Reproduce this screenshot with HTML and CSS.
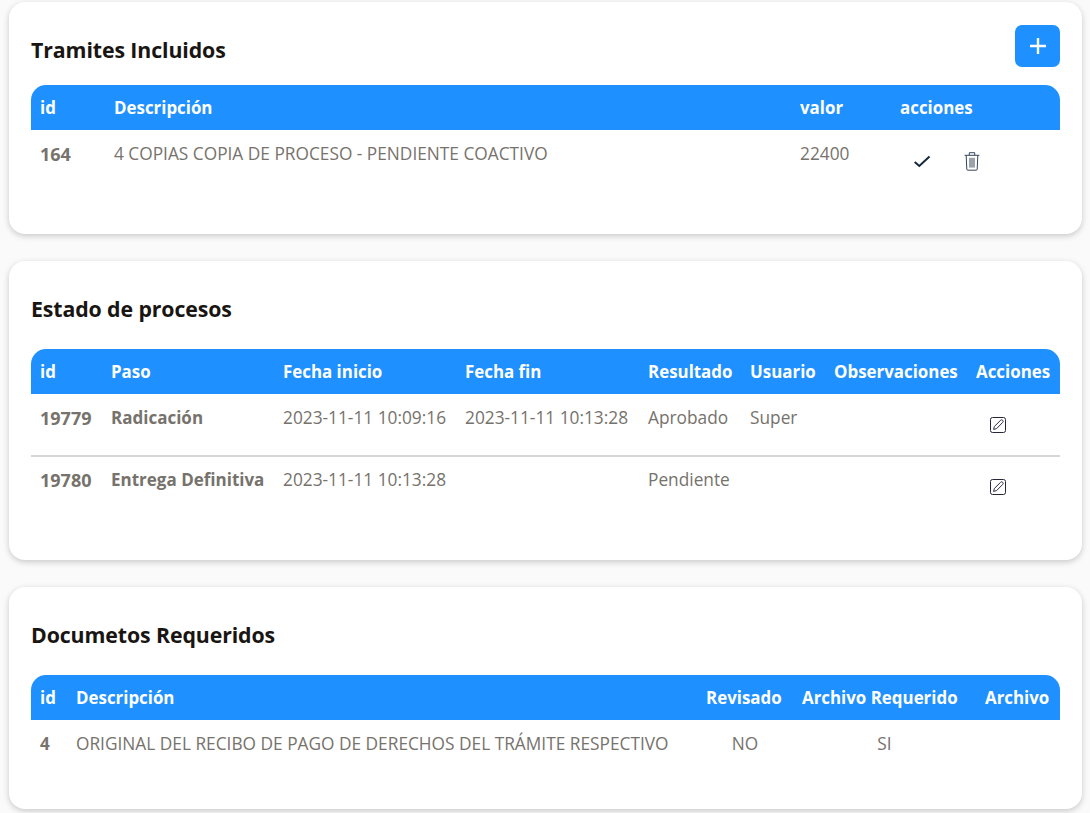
FILE: index.html
```
<!DOCTYPE html>
<html lang="es">
<head>
<meta charset="utf-8">
<title>Trámites</title>
<link rel="stylesheet" href="styles.css">
</head>
<body>
<main class="page">
  <section class="card card-one">
    <div class="card-head head-one">
      <h2>Tramites Incluidos</h2>
      <button class="add" type="button" aria-label="Agregar">
        <svg width="16" height="16" viewBox="0 0 16 16"><path d="M8 0v16M0 8h16" stroke="#fff" stroke-width="2.400" fill="none"/></svg>
      </button>
    </div>
    <table>
      <colgroup><col class="w74"><col class="w686"><col class="w100"><col></colgroup>
      <thead><tr><th>id</th><th>Descripción</th><th>valor</th><th>acciones</th></tr></thead>
      <tbody>
        <tr>
          <td class="b num">164</td>
          <td>4 COPIAS COPIA DE PROCESO - PENDIENTE COACTIVO</td>
          <td>22400</td>
          <td class="actions">
            <div class="action-row">
              <svg width="20" height="20" viewBox="0 0 20 20"><path d="M2.700 11l4.600 4L17.500 5.500" stroke="#14283c" stroke-width="2" fill="none"/></svg>
              <svg width="20" height="20" viewBox="0 0 20 20" fill="none" stroke="#34465a" stroke-width="1"><path d="M2.600 4.300h14.800M7.300 4.300V1.700h5.400v2.600M4.200 4.300l.6 14c0 .5.4.9.9.9h8.600c.5 0 .9-.4.9-.9l.6-14M8 6.800v9.800M10 6.800v9.800M12 6.800v9.800"/></svg>
            </div>
          </td>
        </tr>
      </tbody>
    </table>
  </section>

  <section class="card card-two">
    <div class="card-head head-two"><h2>Estado de procesos</h2></div>
    <table>
      <colgroup><col class="w71"><col class="w172"><col class="w182"><col class="w183"><col class="w102"><col class="w84"><col class="w142"><col></colgroup>
      <thead><tr><th>id</th><th>Paso</th><th>Fecha inicio</th><th>Fecha fin</th><th>Resultado</th><th>Usuario</th><th>Observaciones</th><th>Acciones</th></tr></thead>
      <tbody>
        <tr class="sep">
          <td class="b num">19779</td><td class="b">Radicación</td><td>2023-11-11 10:09:16</td><td>2023-11-11 10:13:28</td><td>Aprobado</td><td>Super</td><td></td>
          <td class="edit-cell"><svg class="edit" width="16" height="16" viewBox="0 0 16 16" fill="none"><rect x=".5" y=".5" width="15" height="15" rx="2" stroke="#2b2438"/><path d="M3.600 12.400l.8-3L10.600 3.300a1.400 1.400 0 0 1 2.100 2.100L6.600 11.600z" stroke="#2b2b45" stroke-width="1"/></svg></td>
        </tr>
        <tr class="after-sep">
          <td class="b num">19780</td><td class="b">Entrega Definitiva</td><td>2023-11-11 10:13:28</td><td></td><td>Pendiente</td><td></td><td></td>
          <td class="edit-cell"><svg class="edit" width="16" height="16" viewBox="0 0 16 16" fill="none"><rect x=".5" y=".5" width="15" height="15" rx="2" stroke="#2b2438"/><path d="M3.600 12.400l.8-3L10.600 3.300a1.400 1.400 0 0 1 2.100 2.100L6.600 11.600z" stroke="#2b2b45" stroke-width="1"/></svg></td>
        </tr>
      </tbody>
    </table>
  </section>

  <section class="card card-three">
    <div class="card-head head-two"><h2>Documetos Requeridos</h2></div>
    <table>
      <colgroup><col class="w36"><col class="w630"><col class="w96"><col class="w183"><col></colgroup>
      <thead><tr><th>id</th><th>Descripción</th><th>Revisado</th><th>Archivo Requerido</th><th>Archivo</th></tr></thead>
      <tbody>
        <tr>
          <td class="b">4</td><td>ORIGINAL DEL RECIBO DE PAGO DE DERECHOS DEL TRÁMITE RESPECTIVO</td><td class="center">NO</td><td class="center">SI</td><td></td>
        </tr>
      </tbody>
    </table>
  </section>
</main>
</body>
</html>
```
FILE: styles.css
```
* { box-sizing: border-box; }
html, body { margin: 0; height: 813px; overflow: hidden; background: #fafafa; }
body { font-family: "Open Sans", "Noto Sans", sans-serif; color: #76726c; }
.page { display: flex; flex-direction: column; gap: 27px; padding: 2px 8px 0 9px; }
.card { background: #fff; border-radius: 16px; box-shadow: 0 2px 6px rgba(0,0,0,.2); padding: 0 22px; }
.card-one { height: 232px; }
.card-two { height: 299px; }
.card-three { height: 222px; }
.card-head { display: flex; align-items: center; justify-content: space-between; }
.head-one { height: 83px; padding-top: 11px; }
.head-two { height: 88px; padding-top: 6px; }
h2 { margin: 0; font-size: 21.3px; font-weight: 700; color: #181512; letter-spacing: -.1px; }
.add { width: 45px; height: 42px; margin-top: -6px; border: 0; border-radius: 7px; background: #1e90ff; display: flex; align-items: center; justify-content: center; padding: 0; }
table { width: 100%; table-layout: fixed; border-collapse: separate; border-spacing: 0; font-size: 17.300px; }
th { background: #1e90ff; color: #fff; font-weight: 700; text-align: left; height: 45px; padding: 0 9px; font-size: 16.900px; white-space: nowrap; }
th:first-child { border-top-left-radius: 15px; }
th:last-child { border-top-right-radius: 15px; }
td { height: 62px; padding: 0 9px 15px; white-space: nowrap; vertical-align: middle; font-weight: 400; }
td.b { font-weight: 700; font-size: 17px; }
td.num { font-size: 18px; }
.sep td { height: 63px; padding-bottom: 14px; border-bottom: 2px solid #d6d6d6; }
.after-sep td { padding-bottom: 17px; }
.center { text-align: center; }
.actions { padding-bottom: 0; }
.action-row { display: flex; gap: 30px; padding-left: 3px; transform: translateX(9px); }
.sep .edit-cell, .edit-cell { padding: 0 0 0 23px; }
.after-sep .edit-cell { padding-bottom: 2px; }
.edit { display: block; }
.w74 { width: 74px; } .w686 { width: 686px; } .w100 { width: 100px; }
.w71 { width: 71px; } .w172 { width: 172px; } .w182 { width: 182px; } .w183 { width: 183px; } .w102 { width: 102px; } .w84 { width: 84px; } .w142 { width: 142px; }
.w36 { width: 36px; } .w630 { width: 630px; } .w96 { width: 96px; }
```
